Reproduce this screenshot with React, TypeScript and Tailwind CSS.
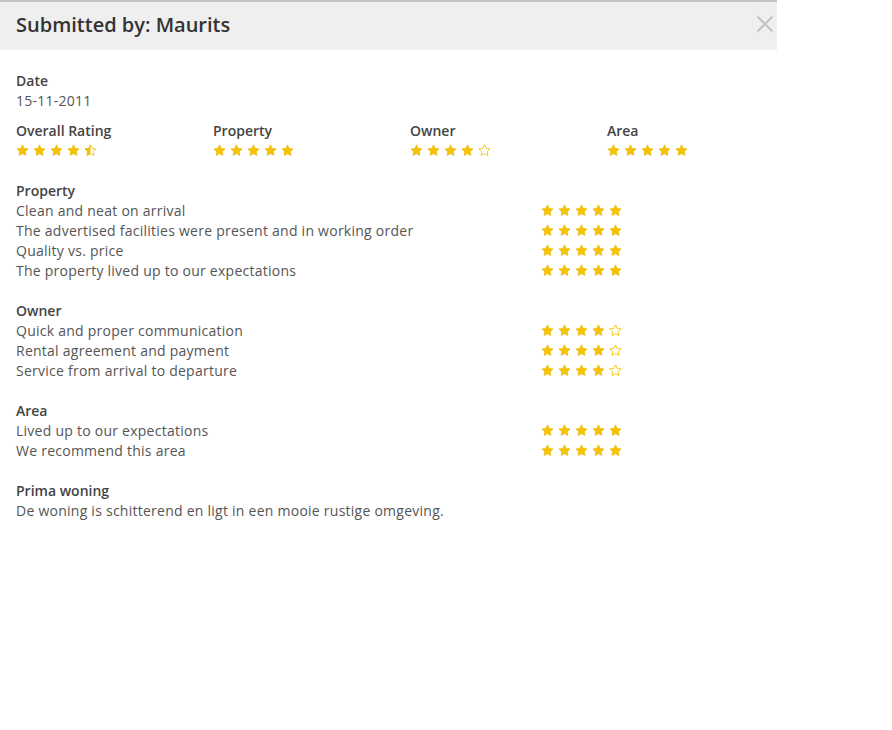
import React from "react";

const STAR = "M12 1.6l3.1 6.6 7.2.9-5.3 5 1.4 7.1L12 17.7l-6.4 3.5 1.4-7.1-5.3-5 7.2-.9z";

function Star({ type }: { type: "full" | "half" | "empty" }) {
  return (
    <svg width="13" height="13" viewBox="0 0 24 24" className="shrink-0">
      <defs>
        <clipPath id="halfclip">
          <rect x="0" y="0" width="12" height="24" />
        </clipPath>
      </defs>
      {type === "full" && (
        <path d={STAR} fill="#f5c400" stroke="#e9b400" strokeWidth="1.2" strokeLinejoin="round" />
      )}
      {type === "empty" && (
        <path d={STAR} fill="none" stroke="#f0c000" strokeWidth="1.6" strokeLinejoin="round" />
      )}
      {type === "half" && (
        <>
          <path d={STAR} fill="none" stroke="#f0c000" strokeWidth="1.6" strokeLinejoin="round" />
          <path d={STAR} fill="#f5c400" stroke="#e9b400" strokeWidth="1.2" clipPath="url(#halfclip)" />
        </>
      )}
    </svg>
  );
}

function Stars({ value }: { value: number }) {
  const items: ("full" | "half" | "empty")[] = [];
  for (let i = 1; i <= 5; i++) {
    if (value >= i) items.push("full");
    else if (value >= i - 0.5) items.push("half");
    else items.push("empty");
  }
  return (
    <div className="flex h-5 items-start gap-[4px] pt-[3px]">
      {items.map((t, i) => (
        <Star key={i} type={t} />
      ))}
    </div>
  );
}

const sections = [
  {
    title: "Property",
    rows: [
      ["Clean and neat on arrival", 5],
      ["The advertised facilities were present and in working order", 5],
      ["Quality vs. price", 5],
      ["The property lived up to our expectations", 5],
    ],
  },
  {
    title: "Owner",
    rows: [
      ["Quick and proper communication", 4],
      ["Rental agreement and payment", 4],
      ["Service from arrival to departure", 4],
    ],
  },
  {
    title: "Area",
    rows: [
      ["Lived up to our expectations", 5],
      ["We recommend this area", 5],
    ],
  },
] as const;

export default function App() {
  return (
    <div
      className="min-h-[730px] w-[892px] bg-white text-[14px] leading-5 tracking-[0.25px] text-[#555]"
      style={{ fontFamily: '"Open Sans", "Noto Sans", sans-serif' }}
    >
      <div className="w-[777px]">
        <div className="flex h-[50px] items-center justify-between border-t-2 border-[#c4c4c4] bg-[#efefef] pl-4 pr-[2px]">
          <h1 className="-mt-[2px] text-[20px] font-semibold tracking-normal text-[#333]">Submitted by: Maurits</h1>
          <svg width="20" height="20" viewBox="0 0 20 20" className="mb-[4px]">
            <path d="M2.5 2.5L17.5 17.5M17.5 2.5L2.5 17.5" stroke="#c2c2c2" strokeWidth="2.2" />
          </svg>
        </div>
        <div className="px-4 pt-[21px]">
          <div className="font-semibold tracking-normal text-[#444]">Date</div>
          <div>15-11-2011</div>

          <div className="mt-[10px] grid w-[788px] grid-cols-4">
            {[
              ["Overall Rating", 4.5],
              ["Property", 5],
              ["Owner", 4],
              ["Area", 5],
            ].map(([label, v]) => (
              <div key={label as string}>
                <div className="font-semibold tracking-normal text-[#444]">{label}</div>
                <Stars value={v as number} />
              </div>
            ))}
          </div>

          {sections.map((s) => (
            <div key={s.title} className="mt-5">
              <div className="font-semibold tracking-normal text-[#444]">{s.title}</div>
              {s.rows.map(([label, v]) => (
                <div key={label} className="flex">
                  <div className="w-[525px]">{label}</div>
                  <Stars value={v} />
                </div>
              ))}
            </div>
          ))}

          <div className="mt-5">
            <div className="font-semibold tracking-normal text-[#444]">Prima woning</div>
            <div>De woning is schitterend en ligt in een mooie rustige omgeving.</div>
          </div>
        </div>
      </div>
    </div>
  );
}
